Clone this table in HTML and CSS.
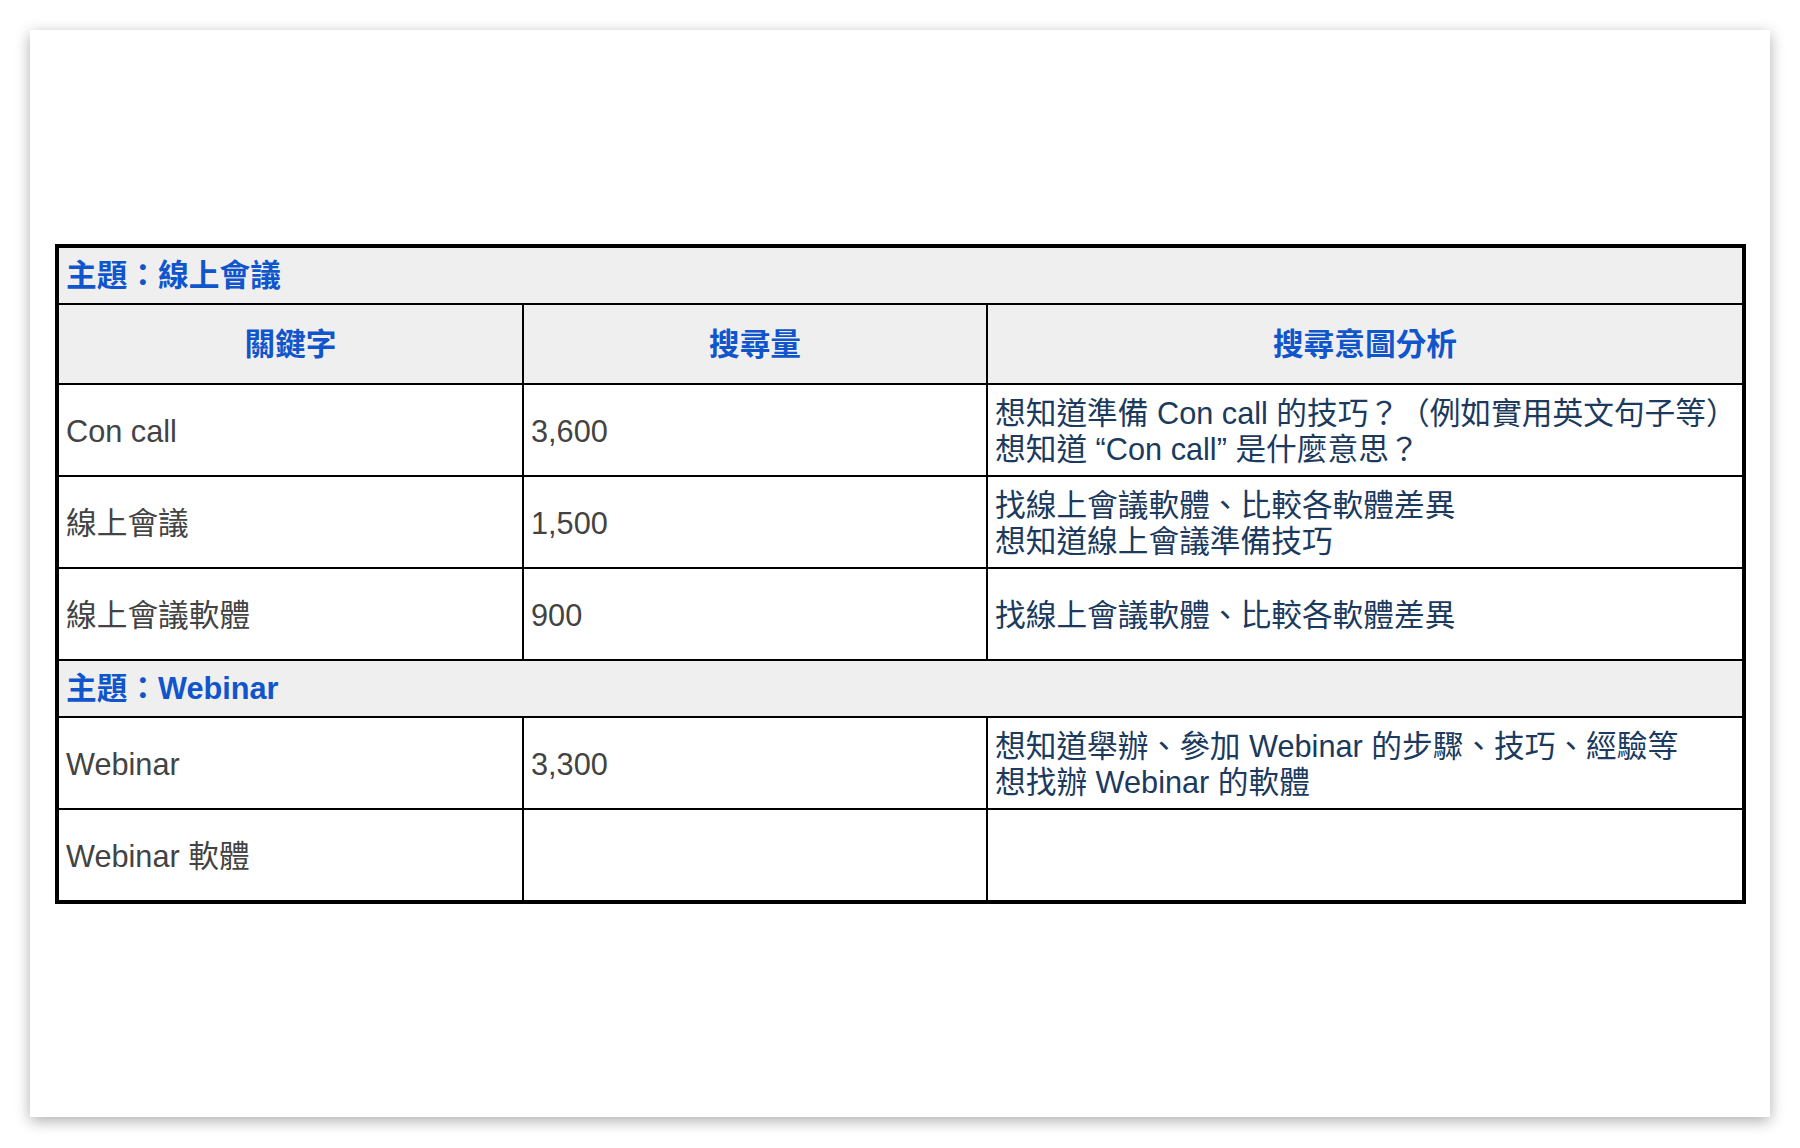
FILE: index.html
```html
<!DOCTYPE html>
<html lang="zh-Hant">
<head>
<meta charset="utf-8">
<title>主題：線上會議</title>
<link rel="stylesheet" href="styles.css">
</head>
<body>
<div class="card">
  <table class="kw">
    <colgroup>
      <col class="c1">
      <col class="c2">
      <col class="c3">
    </colgroup>
    <tr class="topic">
      <td colspan="3">主題：線上會議</td>
    </tr>
    <tr class="head">
      <td>關鍵字</td>
      <td>搜尋量</td>
      <td>搜尋意圖分析</td>
    </tr>
    <tr class="row">
      <td class="kwd">Con call</td>
      <td class="vol">3,600</td>
      <td class="intent">想知道準備 Con call 的技巧？（例如實用英文句子等）<br>想知道 “Con call” 是什麼意思？</td>
    </tr>
    <tr class="row">
      <td class="kwd">線上會議</td>
      <td class="vol">1,500</td>
      <td class="intent">找線上會議軟體、比較各軟體差異<br>想知道線上會議準備技巧</td>
    </tr>
    <tr class="row">
      <td class="kwd">線上會議軟體</td>
      <td class="vol">900</td>
      <td class="intent">找線上會議軟體、比較各軟體差異</td>
    </tr>
    <tr class="topic">
      <td colspan="3">主題：Webinar</td>
    </tr>
    <tr class="row">
      <td class="kwd">Webinar</td>
      <td class="vol">3,300</td>
      <td class="intent">想知道舉辦、參加 Webinar 的步驟、技巧、經驗等<br>想找辦 Webinar 的軟體</td>
    </tr>
    <tr class="row">
      <td class="kwd">Webinar 軟體</td>
      <td class="vol"></td>
      <td class="intent"></td>
    </tr>
  </table>
</div>
</body>
</html>
```

FILE: styles.css
```css
html, body {
  margin: 0;
  padding: 0;
  background: #ffffff;
}

body {
  width: 1800px;
  height: 1148px;
  overflow: hidden;
  padding-top: 30px;
  padding-left: 30px;
  box-sizing: border-box;
  font-family: "Liberation Sans", "Noto Sans CJK TC", sans-serif;
}

.card {
  width: 1740px;
  height: 1087px;
  background: #ffffff;
  box-shadow: 0 4px 14px rgba(0, 0, 0, 0.32);
  padding: 214px 23px 0 25px;
  box-sizing: border-box;
}

.kw {
  width: 1687px;
  table-layout: fixed;
  border-collapse: collapse;
  border: 4px solid #000;
  font-size: 30.7px;
  line-height: 36px;
}

.c1 { width: 466px; }
.c2 { width: 464px; }
.c3 { width: 757px; }

.kw td {
  border: 2px solid #000;
  padding: 3px 7px 0;
  vertical-align: middle;
  text-align: left;
}

.topic td {
  background: #efefef;
  color: #1155cc;
  font-weight: bold;
  height: 54px;
  padding-top: 1px;
}

.head td {
  background: #efefef;
  color: #1155cc;
  font-weight: bold;
  text-align: center;
  height: 76px;
  padding-top: 2px;
}

.row td {
  height: 87px;
}

.kwd, .vol {
  color: #434343;
}

.intent {
  color: #1b3a5e;
  white-space: nowrap;
}
```
